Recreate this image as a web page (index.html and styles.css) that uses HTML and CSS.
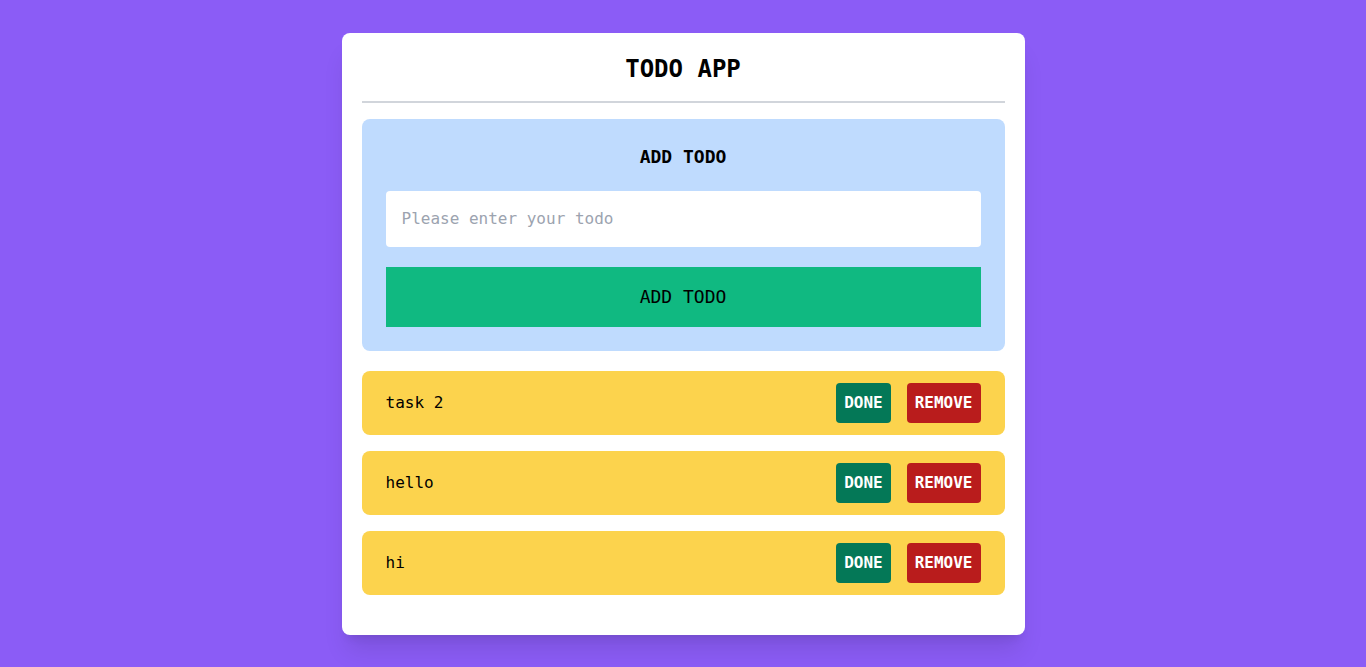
FILE: index.html
```html
<!DOCTYPE html>
<html lang="en">
<head>
<meta charset="utf-8">
<title>Todo App</title>
<link rel="stylesheet" href="styles.css">
</head>
<body>
<main class="card">
  <h1 class="title">TODO APP</h1>
  <hr class="divider">
  <section class="add-box">
    <h2 class="add-title">ADD TODO</h2>
    <input class="add-input" type="text" placeholder="Please enter your todo">
    <button class="add-btn">ADD TODO</button>
  </section>
  <ul class="todo-list">
    <li class="todo-item">
      <span class="todo-text">task 2</span>
      <div class="todo-actions">
        <button class="btn btn-done">DONE</button>
        <button class="btn btn-remove">REMOVE</button>
      </div>
    </li>
    <li class="todo-item">
      <span class="todo-text">hello</span>
      <div class="todo-actions">
        <button class="btn btn-done">DONE</button>
        <button class="btn btn-remove">REMOVE</button>
      </div>
    </li>
    <li class="todo-item">
      <span class="todo-text">hi</span>
      <div class="todo-actions">
        <button class="btn btn-done">DONE</button>
        <button class="btn btn-remove">REMOVE</button>
      </div>
    </li>
  </ul>
</main>
</body>
</html>
```

FILE: styles.css
```css
* { box-sizing: border-box; }
html, body {
  margin: 0;
  padding: 0;
}
body {
  background: #8b5cf6;
  font-family: "DejaVu Sans Mono", monospace;
  color: #000;
  min-height: 667px;
  padding-top: 33px;
}
.card {
  width: 683px;
  margin: 0 auto;
  background: #fff;
  border-radius: 8px;
  padding: 20px 20px 40px;
  box-shadow: 0 20px 25px -5px rgba(0,0,0,0.1), 0 8px 10px -6px rgba(0,0,0,0.1);
}
.title {
  margin: 0 0 16px;
  font-size: 24px;
  line-height: 32px;
  font-weight: bold;
  text-align: center;
}
.divider {
  margin: 0 0 16px;
  border: 0;
  height: 2px;
  background: #d1d5db;
}
.add-box {
  background: #bfdbfe;
  border-radius: 8px;
  padding: 24px;
  display: flex;
  flex-direction: column;
  gap: 20px;
}
.add-title {
  margin: 0;
  font-size: 18px;
  line-height: 28px;
  font-weight: bold;
  text-align: center;
}
.add-input {
  height: 56px;
  border: 0;
  border-radius: 4px;
  padding: 15px 16px 17px;
  line-height: 24px;
  font-family: inherit;
  font-size: 16px;
  background: #fff;
  outline: none;
}
.add-input::placeholder { color: #9ca3af; }
.add-btn {
  height: 60px;
  border: 0;
  padding: 16px 0;
  line-height: 28px;
  background: #10b981;
  color: #000;
  font-family: inherit;
  font-size: 18px;
  cursor: pointer;
}
.todo-list {
  list-style: none;
  margin: 20px 0 0;
  padding: 0;
  display: flex;
  flex-direction: column;
  gap: 16px;
}
.todo-item {
  background: #fcd34d;
  border-radius: 8px;
  padding: 12px 24px;
  display: flex;
  align-items: center;
  justify-content: space-between;
}
.todo-text {
  font-size: 16px;
  line-height: 24px;
}
.todo-actions {
  display: flex;
  gap: 16px;
}
.btn {
  border: 0;
  border-radius: 4px;
  padding: 8px;
  font-family: inherit;
  font-size: 16px;
  line-height: 24px;
  font-weight: bold;
  color: #fff;
  cursor: pointer;
}
.btn-done { background: #047857; }
.btn-remove { background: #b91c1c; }
```
